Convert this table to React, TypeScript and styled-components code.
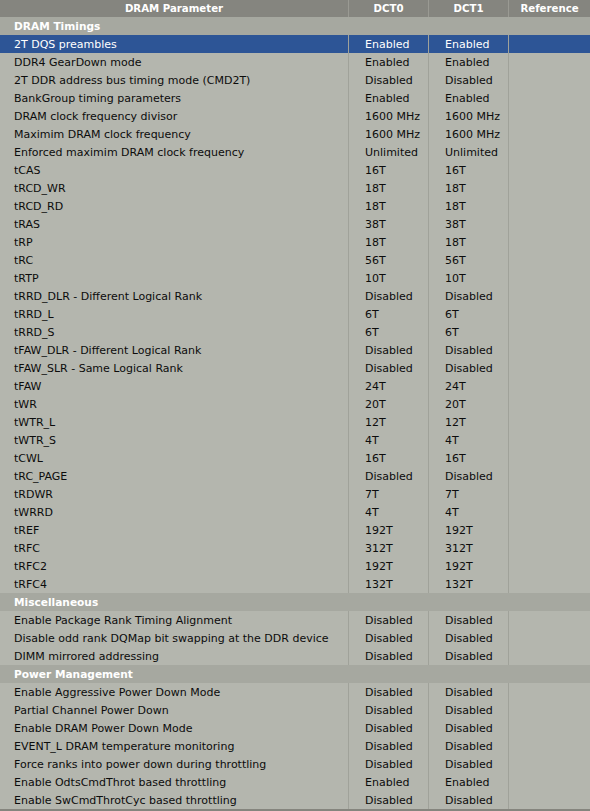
import React from 'react';
import styled, { createGlobalStyle } from 'styled-components';

const GlobalStyle = createGlobalStyle`
  html, body {
    margin: 0;
    padding: 0;
    background: #b4b6ae;
  }
  body {
    font-family: "DejaVu Sans", Verdana, sans-serif;
    font-size: 11px;
  }
`;

const COLS = '348px 80px 80px 82px';

const Table = styled.div`
  width: 590px;
  background: #b4b6ae;
  border-bottom: 2px solid #85857e;
`;

const HeaderRow = styled.div`
  display: grid;
  grid-template-columns: ${COLS};
  height: 17px;
  background: #85857f;
`;

const HeaderCell = styled.div`
  display: flex;
  align-items: center;
  justify-content: center;
  color: #ffffff;
  font-weight: bold;
  font-size: 10.2px;
  border-left: 1px solid #9a9a93;
  &:first-child {
    border-left: none;
  }
`;

const SectionRow = styled.div`
  height: 18px;
  display: flex;
  align-items: center;
  padding-left: 14px;
  background: #a6a8a0;
  color: #ffffff;
  font-weight: bold;
  font-size: 10.6px;
`;

const Row = styled.div<{ $selected?: boolean }>`
  display: grid;
  grid-template-columns: ${COLS};
  height: 18px;
  background: ${(p) => (p.$selected ? '#2d5596' : 'transparent')};
  color: ${(p) => (p.$selected ? '#ffffff' : '#0c0c0c')};
`;

const Cell = styled.div<{ $first?: boolean }>`
  display: flex;
  align-items: center;
  padding-left: ${(p) => (p.$first ? '14px' : '16px')};
  border-left: ${(p) => (p.$first ? 'none' : '1px solid #a0a29a')};
  white-space: nowrap;
  overflow: hidden;
`;

type Item = [string, string, string];

const sections: { title: string; rows: Item[] }[] = [
  {
    title: 'DRAM Timings',
    rows: [
      ['2T DQS preambles', 'Enabled', 'Enabled'],
      ['DDR4 GearDown mode', 'Enabled', 'Enabled'],
      ['2T DDR address bus timing mode (CMD2T)', 'Disabled', 'Disabled'],
      ['BankGroup timing parameters', 'Enabled', 'Enabled'],
      ['DRAM clock frequency divisor', '1600 MHz', '1600 MHz'],
      ['Maximim DRAM clock frequency', '1600 MHz', '1600 MHz'],
      ['Enforced maximim DRAM clock frequency', 'Unlimited', 'Unlimited'],
      ['tCAS', '16T', '16T'],
      ['tRCD_WR', '18T', '18T'],
      ['tRCD_RD', '18T', '18T'],
      ['tRAS', '38T', '38T'],
      ['tRP', '18T', '18T'],
      ['tRC', '56T', '56T'],
      ['tRTP', '10T', '10T'],
      ['tRRD_DLR - Different Logical Rank', 'Disabled', 'Disabled'],
      ['tRRD_L', '6T', '6T'],
      ['tRRD_S', '6T', '6T'],
      ['tFAW_DLR - Different Logical Rank', 'Disabled', 'Disabled'],
      ['tFAW_SLR - Same Logical Rank', 'Disabled', 'Disabled'],
      ['tFAW', '24T', '24T'],
      ['tWR', '20T', '20T'],
      ['tWTR_L', '12T', '12T'],
      ['tWTR_S', '4T', '4T'],
      ['tCWL', '16T', '16T'],
      ['tRC_PAGE', 'Disabled', 'Disabled'],
      ['tRDWR', '7T', '7T'],
      ['tWRRD', '4T', '4T'],
      ['tREF', '192T', '192T'],
      ['tRFC', '312T', '312T'],
      ['tRFC2', '192T', '192T'],
      ['tRFC4', '132T', '132T'],
    ],
  },
  {
    title: 'Miscellaneous',
    rows: [
      ['Enable Package Rank Timing Alignment', 'Disabled', 'Disabled'],
      ['Disable odd rank DQMap bit swapping at the DDR device', 'Disabled', 'Disabled'],
      ['DIMM mirrored addressing', 'Disabled', 'Disabled'],
    ],
  },
  {
    title: 'Power Management',
    rows: [
      ['Enable Aggressive Power Down Mode', 'Disabled', 'Disabled'],
      ['Partial Channel Power Down', 'Disabled', 'Disabled'],
      ['Enable DRAM Power Down Mode', 'Disabled', 'Disabled'],
      ['EVENT_L DRAM temperature monitoring', 'Disabled', 'Disabled'],
      ['Force ranks into power down during throttling', 'Disabled', 'Disabled'],
      ['Enable OdtsCmdThrot based throttling', 'Enabled', 'Enabled'],
      ['Enable SwCmdThrotCyc based throttling', 'Disabled', 'Disabled'],
    ],
  },
];

export default function App() {
  return (
    <>
      <GlobalStyle />
      <Table>
        <HeaderRow>
          <HeaderCell>DRAM Parameter</HeaderCell>
          <HeaderCell>DCT0</HeaderCell>
          <HeaderCell>DCT1</HeaderCell>
          <HeaderCell>Reference</HeaderCell>
        </HeaderRow>
        {sections.map((s) => (
          <React.Fragment key={s.title}>
            <SectionRow>{s.title}</SectionRow>
            {s.rows.map((r, i) => (
              <Row key={r[0]} $selected={s.title === 'DRAM Timings' && i === 0}>
                <Cell $first>{r[0]}</Cell>
                <Cell>{r[1]}</Cell>
                <Cell>{r[2]}</Cell>
                <Cell />
              </Row>
            ))}
          </React.Fragment>
        ))}
      </Table>
    </>
  );
}
